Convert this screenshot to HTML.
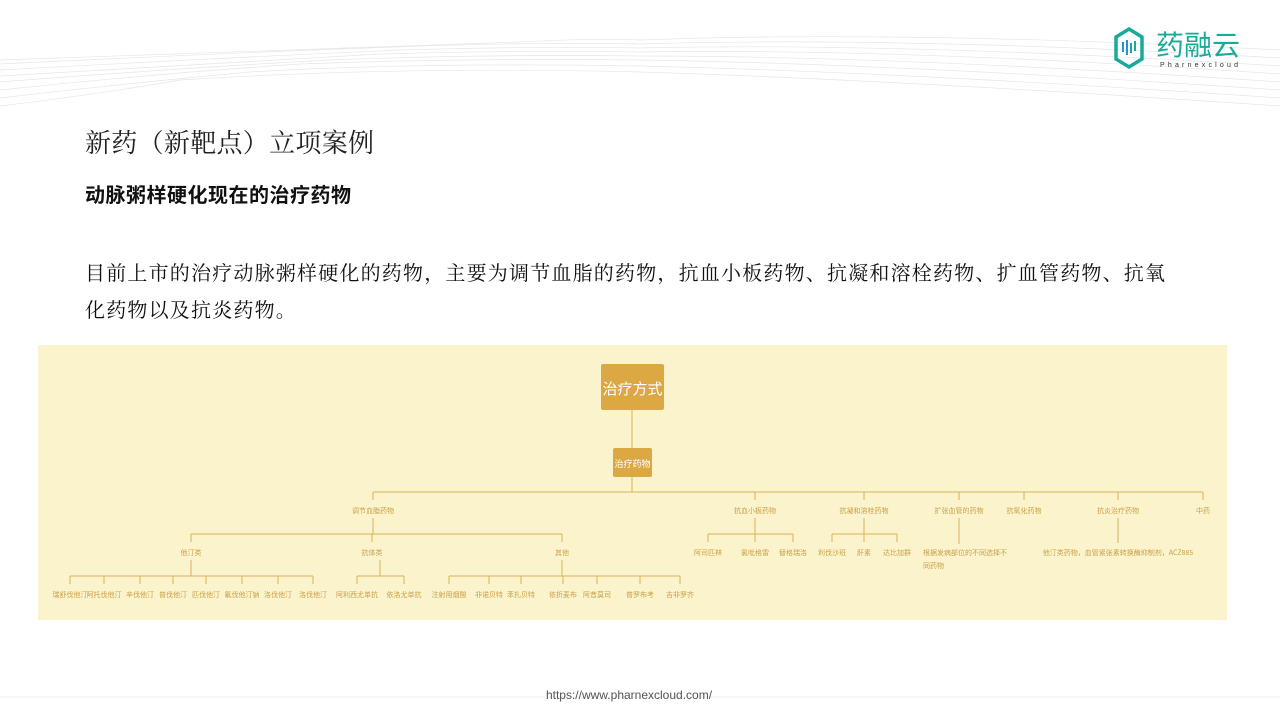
<!DOCTYPE html>
<html><head><meta charset="utf-8"><style>
body{margin:0;width:1280px;height:720px;background:#fff;position:relative;overflow:hidden;font-family:"Liberation Sans","Noto Sans CJK SC",sans-serif}
.t{position:absolute;left:85px;top:123px;font-size:26px;font-family:"Liberation Serif","Noto Serif CJK SC",serif;color:#222;white-space:nowrap;letter-spacing:0.3px}
.s{position:absolute;left:85px;top:179px;font-size:20px;font-weight:bold;color:#111;white-space:nowrap;letter-spacing:0.5px}
.p{position:absolute;left:85px;top:253px;width:1150px;font-size:20px;line-height:37px;font-family:"Noto Serif CJK SC",serif;color:#111;white-space:nowrap;letter-spacing:1.2px}
.box{position:absolute;left:38px;top:345px;width:1189px;height:275px;background:#fbf3cb}
.url{position:absolute;left:0;width:1258px;top:688px;text-align:center;font-size:12px;color:#555}
</style></head><body>
<svg style="position:absolute;left:0;top:0" width="1280" height="120">
<g fill="none" stroke="#e6e6e6" stroke-width="0.7">
<path d="M0 60 Q 300 50 520 42 Q 600 38 640 40 Q 900 30 1280 50"/>
<path d="M0 64 Q 250 52 420 46 Q 560 42 640 44 Q 900 36 1280 58"/>
<path d="M0 70 Q 220 58 400 50 Q 540 46 640 48 Q 900 42 1280 66"/>
<path d="M0 76 Q 200 64 380 54 Q 520 50 640 52 Q 900 48 1280 74"/>
<path d="M0 82 Q 180 68 330 60 Q 480 54 640 56 Q 900 56 1280 82"/>
<path d="M0 90 Q 150 74 300 64 Q 460 58 640 60 Q 900 64 1280 90"/>
<path d="M0 98 Q 120 84 250 72 Q 420 62 640 66 Q 900 72 1280 98"/>
<path d="M0 106 Q 100 94 180 80 Q 400 66 640 72 Q 900 80 1280 106"/>
</g>
<g transform="translate(1114,28)">
<path d="M15 1 L28 9 V31 L15 39 L2 31 V9 Z" fill="none" stroke="#1aaa9a" stroke-width="3.5"/>
<g stroke="#2a8fd8" stroke-width="2"><line x1="9" y1="14" x2="9" y2="24"/><line x1="13" y1="12" x2="13" y2="27"/></g>
<g stroke="#1aaa9a" stroke-width="2"><line x1="17" y1="15" x2="17" y2="25"/><line x1="21" y1="13" x2="21" y2="23"/></g>
</g>
<text x="1156" y="55" font-size="28" fill="#1aaa9a" font-family="Noto Sans CJK SC,sans-serif">药融云</text>
<text x="1160" y="67" font-size="7" fill="#333" letter-spacing="3.2">Pharnexcloud</text>
</svg>
<div class="t">新药（新靶点）立项案例</div>
<div class="s">动脉粥样硬化现在的治疗药物</div>
<div class="p">目前上市的治疗动脉粥样硬化的药物，主要为调节血脂的药物，抗血小板药物、抗凝和溶栓药物、扩血管药物、抗氧<br>化药物以及抗炎药物。</div>
<div class="box"></div>
<svg style="position:absolute;left:0;top:0" width="1280" height="720" font-family="Noto Sans CJK SC,sans-serif">
<g stroke="#dcb254" stroke-width="1" fill="none">
<path d="M632 410V448M632 477V492M373 492H1203M373 492V500M755 492V500M864 492V500M959 492V500M1024 492V500M1118 492V500M1203 492V500"/>
<path d="M373 518V534M191 534H562M191 534V542M372 534V542M562 534V542"/>
<path d="M191 560V576M70 576H313M70 576V584M104 576V584M140 576V584M173 576V584M206 576V584M242 576V584M278 576V584M313 576V584"/>
<path d="M380 560V576M357 576H404M357 576V584M404 576V584"/>
<path d="M562 560V576M449 576H680M449 576V584M489 576V584M521 576V584M563 576V584M597 576V584M640 576V584M680 576V584"/>
<path d="M755 518V534M708 534H793M708 534V542M755 534V542M793 534V542"/>
<path d="M864 518V534M832 534H897M832 534V542M864 534V542M897 534V542"/>
<path d="M959 518V544M1118 518V543"/>
</g>
<rect x="601" y="364" width="63" height="46" rx="2" fill="#dba843"/>
<text x="632.5" y="394" font-size="15" fill="#fff" text-anchor="middle">治疗方式</text>
<rect x="613" y="448" width="39" height="29" rx="2" fill="#dba843"/>
<text x="632.5" y="467" font-size="9" fill="#fff" text-anchor="middle">治疗药物</text>
<g font-size="7" fill="#c9a04a" text-anchor="middle">
<text x="373" y="513">调节血脂药物</text><text x="755" y="513">抗血小板药物</text><text x="864" y="513">抗凝和溶栓药物</text><text x="959" y="513">扩张血管的药物</text><text x="1024" y="513">抗氧化药物</text><text x="1118" y="513">抗炎治疗药物</text><text x="1203" y="513">中药</text>
<text x="191" y="555">他汀类</text><text x="372" y="555">抗体类</text><text x="562" y="555">其他</text>
<text x="708" y="555">阿司匹林</text><text x="755" y="555">氯吡格雷</text><text x="793" y="555">替格瑞洛</text>
<text x="832" y="555">利伐沙班</text><text x="864" y="555">肝素</text><text x="897" y="555">达比加群</text>
<text x="1118" y="555">他汀类药物，血管紧张素转换酶抑制剂，ACZ885</text>
<text x="70" y="597">瑞舒伐他汀</text><text x="104" y="597">阿托伐他汀</text><text x="140" y="597">辛伐他汀</text><text x="173" y="597">普伐他汀</text><text x="206" y="597">匹伐他汀</text><text x="242" y="597">氟伐他汀钠</text><text x="278" y="597">洛伐他汀</text><text x="313" y="597">洛伐他汀</text>
<text x="357" y="597">阿利西尤单抗</text><text x="404" y="597">依洛尤单抗</text>
<text x="449" y="597">注射用烟酸</text><text x="489" y="597">非诺贝特</text><text x="521" y="597">苯扎贝特</text><text x="563" y="597">依折麦布</text><text x="597" y="597">阿昔莫司</text><text x="640" y="597">普罗布考</text><text x="680" y="597">吉非罗齐</text>
</g>
<g font-size="7" fill="#c9a04a"><text x="923" y="555">根据发病部位的不同选择不</text><text x="923" y="568">同药物</text></g>
<line x1="0" y1="697" x2="1280" y2="697" stroke="#eee"/>
</svg>
<div class="url">https://www.pharnexcloud.com/</div>
</body></html>
